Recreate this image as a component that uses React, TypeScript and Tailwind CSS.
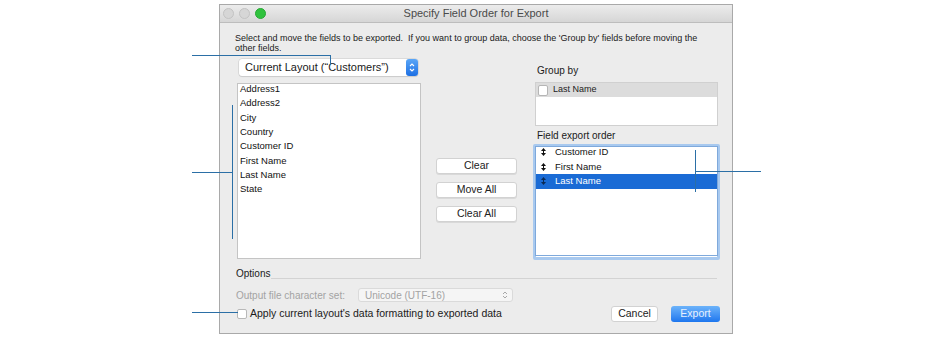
import React from "react";

const FIELDS = ["Address1", "Address2", "City", "Country", "Customer ID", "First Name", "Last Name", "State"];
const ORDER = ["Customer ID", "First Name", "Last Name"];

function SortHandle({ light }: { light?: boolean }) {
  const c = light ? "#0b2a55" : "#111";
  return (
    <svg width="5" height="8" viewBox="0 0 5 8" className="shrink-0">
      <path d="M2.5 0 L5 3 L0 3 Z" fill={c} />
      <path d="M2.5 8 L5 5 L0 5 Z" fill={c} />
      <rect x="2" y="2" width="1" height="4" fill={c} />
    </svg>
  );
}

function Stepper() {
  return (
    <div className="w-[12px] h-[17px] rounded-[3px] bg-gradient-to-b from-[#5aa6f7] to-[#1c6fe3] flex items-center justify-center">
      <svg width="6" height="11" viewBox="0 0 6 11">
        <path d="M1 4 L3 2 L5 4" stroke="white" strokeWidth="1.1" fill="none" />
        <path d="M1 7 L3 9 L5 7" stroke="white" strokeWidth="1.1" fill="none" />
      </svg>
    </div>
  );
}

function Button({ label, w }: { label: string; w: string }) {
  return (
    <div
      className={`${w} h-[16px] bg-white rounded-[3px] border border-[#d2d2d2] shadow-[0_1px_0_rgba(0,0,0,0.08)] flex items-center justify-center text-[10.5px] text-[#222]`}
    >
      {label}
    </div>
  );
}

export default function App() {
  return (
    <div
      className="relative w-[936px] h-[346px] bg-white overflow-hidden"
      style={{ fontFamily: '"Liberation Sans", Arial, sans-serif' }}
    >
      {/* dialog */}
      <div className="ml-[219px] mt-[4px] w-[514px] h-[330px] border border-[#a9a9a9] bg-[#ececec] flex flex-col">
        {/* title bar */}
        <div className="relative h-[18px] shrink-0 bg-gradient-to-b from-[#ececec] to-[#d6d6d6] border-b border-[#bdbdbd] flex items-center">
          <div className="flex items-center gap-[5px] pl-[3px]">
            <span className="w-[11px] h-[11px] rounded-full bg-[#d6d6d6] border border-[#c3c3c3]" />
            <span className="w-[11px] h-[11px] rounded-full bg-[#d6d6d6] border border-[#c3c3c3]" />
            <span className="w-[11px] h-[11px] rounded-full bg-[#2fc23d] border border-[#27a834]" />
          </div>
          <div className="absolute inset-0 flex items-center justify-center text-[11px] text-[#4a4a4a]">
            Specify Field Order for Export
          </div>
        </div>

        {/* instructions */}
        <p className="mt-[10px] pl-[15px] pr-[20px] text-[9px] leading-[10px] text-[#1a1a1a]">
          Select and move the fields to be exported.&nbsp; If you want to group data, choose the 'Group by' fields before moving the other fields.
        </p>

        {/* main row */}
        <div className="mt-[6px] flex items-start">
          {/* left column */}
          <div className="ml-[17px] w-[184px] flex flex-col">
            <div className="ml-[2px] w-[179px] h-[17px] bg-white rounded-[3px] shadow-[0_0_0_0.5px_#c8c8c8,0_1px_1px_rgba(0,0,0,0.12)] flex items-center justify-between">
              <span className="pl-[6px] text-[11px] text-[#1a1a1a]">Current Layout (“Customers”)</span>
              <Stepper />
            </div>
            <div className="mt-[7px] h-[176px] bg-white border border-[#c4c4c4] overflow-hidden">
              <div className="-mt-[2px]">
                {FIELDS.map((f) => (
                  <div key={f} className="h-[14.3px] pl-[2px] flex items-center text-[9.5px] text-[#111]">
                    {f}
                  </div>
                ))}
              </div>
            </div>
          </div>

          {/* middle buttons */}
          <div className="ml-[15px] mt-[99px] flex flex-col gap-[8px]">
            <Button label="Clear" w="w-[81px]" />
            <Button label="Move All" w="w-[81px]" />
            <Button label="Clear All" w="w-[81px]" />
          </div>

          {/* right column */}
          <div className="ml-[16px] w-[187px] flex flex-col">
            <div className="mt-[5px] h-[12px] pl-[4px] flex items-center text-[10px] text-[#1a1a1a]">Group by</div>
            <div className="mt-[6px] mx-[2px] h-[44px] bg-white border border-[#d0d0d0]">
              <div className="h-[14px] bg-[#dcdcdc] flex items-center">
                <span className="ml-[2px] w-[10px] h-[11px] rounded-[2px] bg-white border border-[#b5b5b5]" />
                <span className="ml-[5px] text-[9px] text-[#222]">Last Name</span>
              </div>
            </div>
            <div className="mt-[3px] h-[12px] pl-[4px] flex items-center text-[10px] text-[#1a1a1a]">Field export order</div>
            <div className="mt-[3px] h-[116px] rounded-[2px] border-[3px] border-[#a8c9ef] bg-white">
              <div className="h-full border border-[#7fa9db] -m-px overflow-hidden">
                <div className="-mt-[2px]">
                  {ORDER.map((f, i) => {
                    const sel = i === ORDER.length - 1;
                    return (
                      <div
                        key={f}
                        className={`h-[14.5px] flex items-center pl-[5px] ${sel ? "bg-[#1a6bd5] text-white" : "text-[#111]"}`}
                      >
                        <SortHandle light={sel} />
                        <span className="ml-[9px] text-[9.5px]">{f}</span>
                      </div>
                    );
                  })}
                </div>
              </div>
            </div>
          </div>
        </div>

        {/* options */}
        <div className="mt-[8px] pl-[16px] pr-[15px] flex items-start h-[12px]">
          <span className="text-[10px] leading-[12px] text-[#1a1a1a]">Options</span>
          <div className="ml-[1px] mt-[10px] flex-1 h-px bg-[#d3d3d3]" />
        </div>

        <div className="mt-[8px] pl-[16px] flex items-center h-[14px]">
          <span className="w-[122px] text-[10px] text-[#a3a3a3]">Output file character set:</span>
          <div className="w-[155px] h-[14px] rounded-[3px] bg-[#f5f5f5] border border-[#dadada] flex items-center justify-between">
            <span className="pl-[6px] text-[10px] text-[#a3a3a3]">Unicode (UTF-16)</span>
            <svg width="6" height="10" viewBox="0 0 6 10" className="mr-[4px]">
              <path d="M1 4 L3 2 L5 4" stroke="#a8a8a8" strokeWidth="1" fill="none" />
              <path d="M1 6 L3 8 L5 6" stroke="#a8a8a8" strokeWidth="1" fill="none" />
            </svg>
          </div>
        </div>

        <div className="mt-[4px] pl-[17px] pr-[12px] flex items-center h-[16px]">
          <span className="w-[10px] h-[10px] rounded-[2px] bg-white border border-[#b8b8b8]" />
          <span className="ml-[3px] text-[10.5px] text-[#1a1a1a]">Apply current layout's data formatting to exported data</span>
          <div className="ml-auto flex items-center gap-[13px]">
            <div className="w-[47px] h-[16px] bg-white rounded-[3px] border border-[#d2d2d2] flex items-center justify-center text-[10.5px] text-[#222]">
              Cancel
            </div>
            <div className="w-[49px] h-[16px] rounded-[3px] bg-gradient-to-b from-[#6cb3fa] to-[#1c76ee] flex items-center justify-center text-[10.5px] text-[#e6f1ff]">
              Export
            </div>
          </div>
        </div>
      </div>

      {/* callout lines */}
      <div className="absolute left-[192px] top-[55px] w-[139px] h-px bg-[#2b6fa6]" />
      <div className="absolute left-[330px] top-[55px] w-px h-[10px] bg-[#2b6fa6]" />
      <div className="absolute left-[232px] top-[105px] w-px h-[134px] bg-[#2b6fa6]" />
      <div className="absolute left-[192px] top-[172px] w-[40px] h-px bg-[#2b6fa6]" />
      <div className="absolute left-[695px] top-[150px] w-px h-[42px] bg-[#2b6fa6]" />
      <div className="absolute left-[695px] top-[171px] w-[66px] h-px bg-[#2b6fa6]" />
      <div className="absolute left-[192px] top-[312px] w-[46px] h-px bg-[#2b6fa6]" />
    </div>
  );
}
